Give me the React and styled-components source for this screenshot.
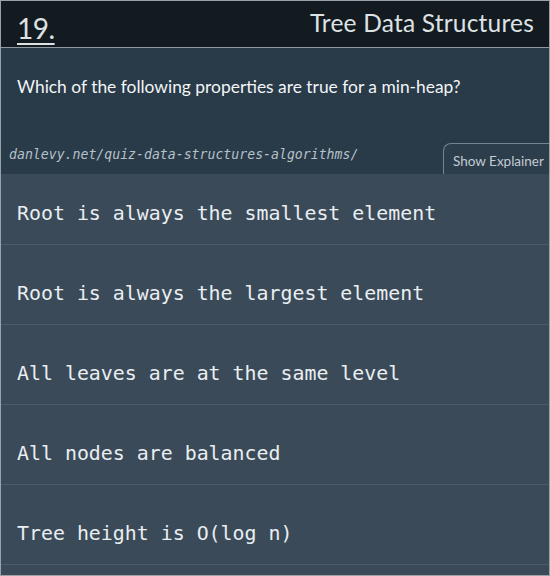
import React from 'react';
import styled, { createGlobalStyle } from 'styled-components';

const GlobalStyle = createGlobalStyle`
	html, body {
		margin: 0;
		padding: 0;
		background: #3a4a58;
	}
	* {
		box-sizing: border-box;
	}
`;

const Frame = styled.div`
	width: 550px;
	height: 576px;
	border: 1px solid #9aa2a8;
	background: #3a4a58;
	overflow: hidden;
	display: flex;
	flex-direction: column;
`;

const Header = styled.header`
	height: 47px;
	background: #131a20;
	border-bottom: 1px solid #8d9aa4;
	display: flex;
	align-items: center;
	justify-content: space-between;
	padding: 0 15px 0 16px;
	font-family: 'Lato', 'Noto Sans', sans-serif;
	color: #dde2e5;
`;

const Number = styled.span`
	font-size: 28px;
	text-decoration: underline;
	text-decoration-thickness: 2px;
	text-underline-offset: 4px;
	letter-spacing: -0.5px;
	padding-top: 7px;
`;

const Title = styled.h1`
	margin: 0;
	font-size: 24.5px;
	font-weight: 400;
	letter-spacing: 0.2px;
	padding-bottom: 3px;
`;

const Question = styled.section`
	background: #293a48;
	height: 126px;
	display: flex;
	flex-direction: column;
	justify-content: space-between;
`;

const Prompt = styled.p`
	margin: 0;
	padding: 28px 16px 0;
	font-family: 'Lato', 'Noto Sans', sans-serif;
	font-size: 17.4px;
	color: #f2f5f7;
`;

const Footer = styled.div`
	display: flex;
	align-items: flex-end;
	justify-content: space-between;
`;

const Link = styled.span`
	font-family: 'DejaVu Sans Mono', monospace;
	font-style: italic;
	font-size: 13.2px;
	color: #b6c1c9;
	padding: 0 0 12px 8px;
`;

const ExplainerTab = styled.button`
	height: 31px;
	width: 106px;
	border: 1px solid #75848f;
	border-bottom: none;
	border-right: none;
	border-radius: 8px 0 0 0;
	background: #2c3d4b;
	color: #c3ccd2;
	font-family: 'Lato', 'Noto Sans', sans-serif;
	font-size: 13.5px;
	padding: 4px 0 0 9px;
	text-align: left;
	white-space: nowrap;
`;

const Options = styled.ul`
	list-style: none;
	margin: 0;
	padding: 0;
`;

const Option = styled.li`
	height: ${(p) => (p.first ? 71 : 80)}px;
	padding-top: ${(p) => (p.first ? 28 : 37)}px;
	padding-left: 16px;
	border-bottom: 1px solid #4b5b69;
	font-family: 'DejaVu Sans Mono', monospace;
	font-size: 19.9px;
	line-height: 24px;
	color: #e9eef1;
`;

const options = [
	'Root is always the smallest element',
	'Root is always the largest element',
	'All leaves are at the same level',
	'All nodes are balanced',
	'Tree height is O(log n)',
];

export default function App() {
	return (
		<>
			<GlobalStyle />
			<Frame>
				<Header>
					<Number>19.</Number>
					<Title>Tree Data Structures</Title>
				</Header>
				<Question>
					<Prompt>Which of the following properties are true for a min-heap?</Prompt>
					<Footer>
						<Link>danlevy.net/quiz-data-structures-algorithms/</Link>
						<ExplainerTab>Show Explainer</ExplainerTab>
					</Footer>
				</Question>
				<Options>
					{options.map((text, i) => (
						<Option key={text} first={i === 0}>
							{text}
						</Option>
					))}
				</Options>
			</Frame>
		</>
	);
}
